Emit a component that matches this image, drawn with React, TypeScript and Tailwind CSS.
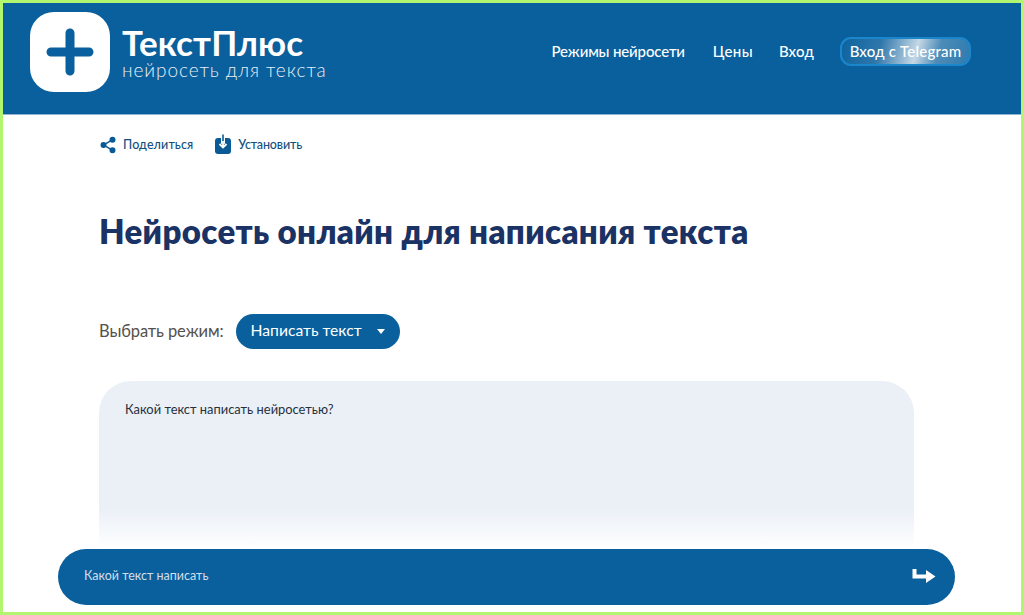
import { Share2 } from "lucide-react";

const NAV = ["Режимы нейросети", "Цены", "Вход"];

function Logo() {
  return (
    <div className="flex items-center">
      <div className="flex h-[80px] w-[80px] items-center justify-center rounded-[24px] bg-white">
        <svg width="48" height="48" viewBox="0 0 48 48">
          <path d="M24 5v38M5 24h38" stroke="#0a5f9e" strokeWidth="9" strokeLinecap="round" fill="none" />
        </svg>
      </div>
      <div className="ml-[12px] mt-[4px] flex flex-col">
        <span className="text-[35px] font-bold leading-[29px] tracking-[0.1px] text-white">ТекстПлюс</span>
        <span className="mt-[3px] text-[19px] font-light leading-[20px] tracking-[0.95px] text-[#e6eef5]">нейросеть для текста</span>
      </div>
    </div>
  );
}

function Header() {
  return (
    <header className="flex h-[112px] items-start justify-between border-b border-b-[#8fb3d2] bg-[#09609d] pl-[27px] pr-[50px] pt-[9px]">
      <Logo />
      <nav className="mt-[25px] flex items-center text-[15px] font-medium text-white">
        {NAV.map((n, i) => (
          <a key={n} className={i === 0 ? "tracking-[-0.15px]" : i === 1 ? "ml-[28px] tracking-[0.35px]" : "ml-[26px] tracking-[0.2px]"}>{n}</a>
        ))}
        <a className="ml-[26px] flex h-[29px] w-[131px] items-center justify-center rounded-[11px] border-2 border-[#1c86cc] bg-[linear-gradient(105deg,#0d639f_0%,#2f77ab_30%,#c5d8e6_58%,#4d8cb8_75%,#2e7bb0_100%)] text-[15px] tracking-[0.2px]">
          Вход с Telegram
        </a>
      </nav>
    </header>
  );
}

function Actions() {
  return (
    <div className="mt-[1px] flex items-center gap-[21px] text-[12.5px] font-medium text-[#14507f]">
      <span className="flex items-center gap-[6px] tracking-[0.1px]">
        <Share2 className="h-[18px] w-[18px] text-[#0a5a96]" fill="#0a5a96" strokeWidth={2} />
        Поделиться
      </span>
      <span className="flex items-center gap-[6px] tracking-[-0.15px]">
        <svg width="18" height="20" viewBox="0 0 18 20" className="mt-[-3px]">
          <rect x="1" y="4" width="16" height="16" rx="3" fill="#0a5a96" />
          <path d="M9 1v11" stroke="#fff" strokeWidth="4" />
          <path d="M9 0.5v11M5 8.500l4 4 4-4" stroke="#0a5a96" strokeWidth="1.600" fill="none" />
          <path d="M9 7v6M5.500 10l3.500 3.500 3.500-3.500" stroke="#fff" strokeWidth="1.800" fill="none" />
        </svg>
        Установить
      </span>
    </div>
  );
}

export default function App() {
  return (
    <div className="relative h-[615px] w-[1024px] overflow-hidden border-[3px] border-[#b2f56f] bg-white font-['Lato','Noto_Sans',sans-serif]">
      <Header />
      <main className="pl-[96px] pt-[20px]">
        <Actions />
        <h1 className="mt-[56px] text-[33px] font-extrabold leading-[40px] tracking-[0.35px] text-[#1a3364]">
          Нейросеть онлайн для написания текста
        </h1>
        <div className="mt-[63px] flex items-center">
          <span className="text-[16.5px] tracking-[-0.1px] text-[#55504c]">Выбрать режим:</span>
          <div className="ml-[12px] flex h-[35px] w-[164px] items-center rounded-full bg-[#09609d] pl-[15px] text-[15.7px] text-white">
            Написать текст
            <span className="ml-[15px] h-0 w-0 border-x-[4px] border-t-[5px] border-x-transparent border-t-white" />
          </div>
        </div>
        <div className="mt-[32px] h-[239px] w-[815px] rounded-t-[32px] bg-[linear-gradient(180deg,#ebf0f7_0%,#ebf0f7_54%,#ffffff_70%)] pl-[26px] pt-[19px] text-[12.9px] text-[#27303c]">
          Какой текст написать нейросетью?
        </div>
      </main>
      <div className="absolute left-[55px] top-[546px] flex h-[56px] w-[897px] items-center justify-between rounded-full bg-[#09609d] pb-[2px] pl-[26px] pr-[19px] text-[12.500px] text-[#d3deea]">
        Какой текст написать
        <svg width="24" height="16" viewBox="0 0 24 16">
          <path d="M0.500 1h4v5.500h9.500V2l9.500 6.500-9.500 6.500v-4.500H0.500z" fill="#fff" />
        </svg>
      </div>
    </div>
  );
}
